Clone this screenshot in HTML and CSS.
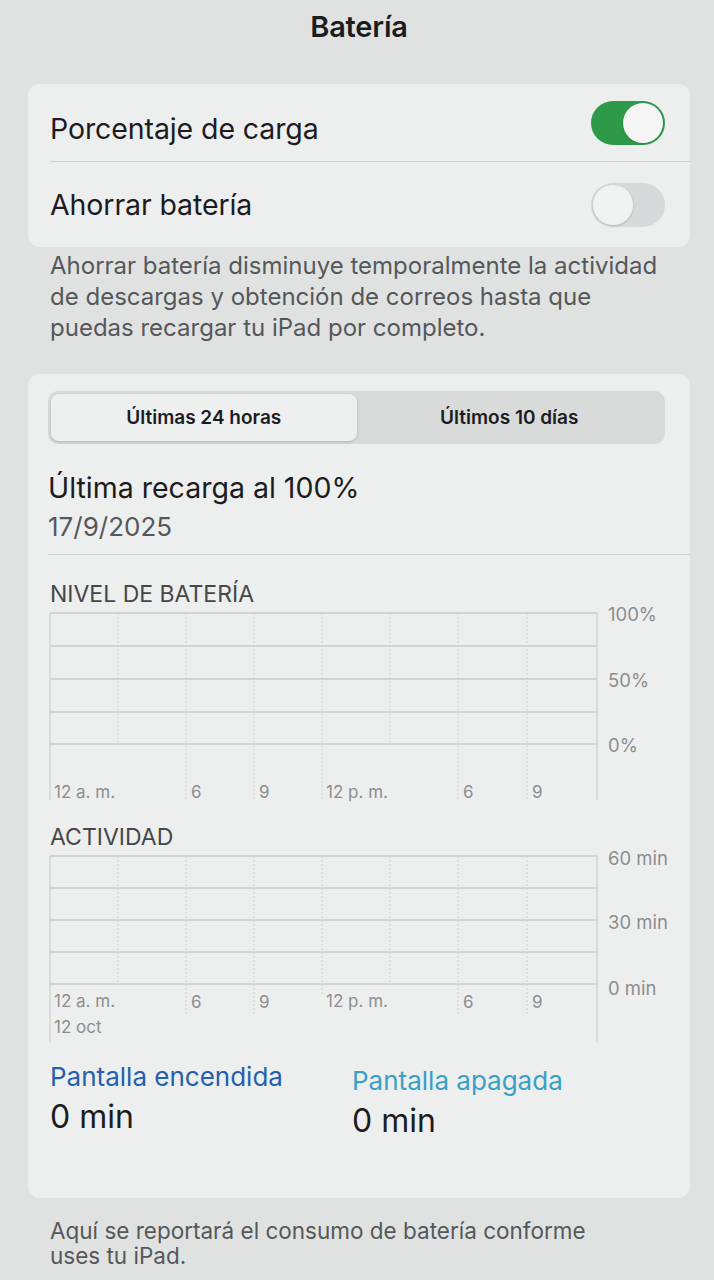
FILE: index.html
```html
<!DOCTYPE html>
<html lang="es">

<head>
    <meta charset="UTF-8">
    <meta name="viewport" content="width=device-width, initial-scale=1.0">
    <title>Batería</title>
    <link rel="stylesheet" href="styles.css">
</head>

<body>
    <div class="page">
        <h1 class="nav-title">Batería</h1>

        <!-- Switches -->
        <div class="card">
            <div class="row row-first">
                <span class="row-label">Porcentaje de carga</span>
                <span class="switch switch-on"><span class="knob"></span></span>
            </div>
            <div class="row row-last">
                <span class="row-label">Ahorrar batería</span>
                <span class="switch"><span class="knob"></span></span>
            </div>
        </div>
        <p class="footnote">Ahorrar batería disminuye temporalmente la actividad<br>de descargas y obtención de correos hasta que<br>puedas recargar tu iPad por completo.</p>

        <!-- Usage -->
        <div class="card usage">
            <div class="segmented">
                <div class="segment selected">Últimas 24 horas</div>
                <div class="segment">Últimos 10 días</div>
            </div>

            <div class="last-charge">Última recarga al 100%</div>
            <div class="last-date">17/9/2025</div>
            <div class="separator"></div>

            <div class="section-label">NIVEL DE BATERÍA</div>
            <svg class="chart" viewBox="0 0 642 200" width="642" height="200">
                <g class="grid-h">
                    <line x1="2" y1="10" x2="549" y2="10" />
                    <line x1="2" y1="43" x2="549" y2="43" />
                    <line x1="2" y1="76" x2="549" y2="76" />
                    <line x1="2" y1="109" x2="549" y2="109" />
                    <line x1="2" y1="141" x2="549" y2="141" />
                </g>
                <g class="grid-v">
                    <line x1="70" y1="10" x2="70" y2="141" />
                    <line x1="342" y1="10" x2="342" y2="141" />
                    <line x1="138" y1="10" x2="138" y2="197" />
                    <line x1="206" y1="10" x2="206" y2="197" />
                    <line x1="274" y1="10" x2="274" y2="197" />
                    <line x1="410" y1="10" x2="410" y2="197" />
                    <line x1="479" y1="10" x2="479" y2="197" />
                </g>
                <g class="grid-edge">
                    <line x1="2" y1="10" x2="2" y2="197" />
                    <line x1="549" y1="10" x2="549" y2="197" />
                </g>
                <g class="axis-y">
                    <text x="560" y="11">100%</text>
                    <text x="560" y="77">50%</text>
                    <text x="560" y="142">0%</text>
                </g>
                <g class="axis-x">
                    <text x="6" y="189">12 a. m.</text>
                    <text x="143" y="189">6</text>
                    <text x="211" y="189">9</text>
                    <text x="278" y="189">12 p. m.</text>
                    <text x="415" y="189">6</text>
                    <text x="484" y="189">9</text>
                </g>
            </svg>

            <div class="section-label section-activity">ACTIVIDAD</div>
            <svg class="chart" viewBox="0 0 642 200" width="642" height="200">
                <g class="grid-h">
                    <line x1="2" y1="10" x2="549" y2="10" />
                    <line x1="2" y1="42" x2="549" y2="42" />
                    <line x1="2" y1="74" x2="549" y2="74" />
                    <line x1="2" y1="106" x2="549" y2="106" />
                    <line x1="2" y1="138" x2="549" y2="138" />
                </g>
                <g class="grid-v">
                    <line x1="70" y1="10" x2="70" y2="138" />
                    <line x1="342" y1="10" x2="342" y2="138" />
                    <line x1="138" y1="10" x2="138" y2="168" />
                    <line x1="206" y1="10" x2="206" y2="168" />
                    <line x1="274" y1="10" x2="274" y2="150" />
                    <line x1="410" y1="10" x2="410" y2="168" />
                    <line x1="479" y1="10" x2="479" y2="168" />
                </g>
                <g class="grid-edge">
                    <line x1="2" y1="10" x2="2" y2="197" />
                    <line x1="549" y1="10" x2="549" y2="197" />
                </g>
                <g class="axis-y">
                    <text x="560" y="12">60 min</text>
                    <text x="560" y="76">30 min</text>
                    <text x="560" y="142">0 min</text>
                </g>
                <g class="axis-x">
                    <text x="6" y="155">12 a. m.</text>
                    <text x="143" y="156">6</text>
                    <text x="211" y="156">9</text>
                    <text x="278" y="155">12 p. m.</text>
                    <text x="415" y="156">6</text>
                    <text x="484" y="156">9</text>
                    <text x="6" y="181">12 oct</text>
                </g>
            </svg>

            <div class="stats">
                <div class="stat">
                    <div class="stat-label on">Pantalla encendida</div>
                    <div class="stat-value">0 min</div>
                </div>
                <div class="stat stat-off">
                    <div class="stat-label off">Pantalla apagada</div>
                    <div class="stat-value">0 min</div>
                </div>
            </div>
        </div>
        <p class="footnote footnote-bottom">Aquí se reportará el consumo de batería conforme<br>uses tu iPad.</p>
    </div>
</body>

</html>
```

FILE: styles.css
```css
body {
    margin: 0;
    background-color: #e0e2e2;
    font-family: 'Inter', 'Roboto', sans-serif;
    color: #1c1c1e;
}

.page {
    padding: 11px 24px 0 28px;
}

.nav-title {
    margin: 0;
    text-align: center;
    font-size: 29px;
    line-height: 32px;
    font-weight: 600;
    letter-spacing: -0.2px;
}

.card {
    margin-top: 41px;
    background-color: #edeeee;
    border-radius: 12px;
}

/* toggle rows */
.row {
    display: flex;
    align-items: center;
    justify-content: space-between;
    padding: 0 25px 0 22px;
}

.row-first {
    height: 78px;
    position: relative;
}

.row-first .row-label {
    padding-top: 10px;
}

.row-first::after {
    content: "";
    position: absolute;
    left: 22px;
    right: 0;
    bottom: 0;
    border-bottom: 1px solid #cfd1d1;
}

.row-last {
    height: 85px;
}

.row-label {
    font-size: 28.5px;
    letter-spacing: -0.1px;
}

.switch {
    display: flex;
    align-items: center;
    width: 74px;
    height: 44px;
    padding: 2px;
    box-sizing: border-box;
    border-radius: 22px;
    background-color: #d8d9da;
}

.switch .knob {
    width: 40px;
    height: 40px;
    border-radius: 50%;
    background-color: #f1f2f2;
    box-shadow: 0 1px 3px rgba(0, 0, 0, 0.15);
}

.switch-on {
    background-color: #2e9a49;
    justify-content: flex-end;
}

.switch-on .knob {
    background-color: #f4f5f4;
}

.footnote {
    margin: 3px 0 0;
    padding-left: 22px;
    font-size: 24px;
    line-height: 31px;
    color: #55585a;
}

/* usage card */
.usage {
    margin-top: 31px;
    padding: 17px 0 60px 20px;
}

.segmented {
    display: flex;
    width: 617px;
    height: 53px;
    padding: 3px;
    box-sizing: border-box;
    border-radius: 10px;
    background-color: #d9dbdb;
}

.segment {
    flex: 1;
    display: flex;
    align-items: center;
    justify-content: center;
    font-size: 19px;
    font-weight: 600;
}

.segment.selected {
    background-color: #eeefef;
    border-radius: 8px;
    box-shadow: 0 1px 3px rgba(0, 0, 0, 0.18);
}

.last-charge {
    margin-top: 27px;
    font-size: 28.5px;
    line-height: 34px;
}

.last-date {
    margin-top: 7px;
    font-size: 26px;
    line-height: 30px;
    color: #55585a;
}

.separator {
    margin-top: 12px;
    border-bottom: 1px solid #cfd1d1;
}

.section-label {
    margin-top: 27px;
    padding-left: 2px;
    font-size: 23px;
    line-height: 24px;
    color: #45484a;
}

.section-activity {
    margin-top: 22px;
}

.chart {
    display: block;
    margin-top: -3px;
    overflow: visible;
}

.grid-h line {
    stroke: #c8caca;
    stroke-width: 1.3;
}

.grid-v line {
    stroke: #cdcfcf;
    stroke-width: 1;
    stroke-dasharray: 2 2;
}

.grid-edge line {
    stroke: #cdcfcf;
    stroke-width: 1.2;
}

.chart text {
    font-family: 'Inter', 'Roboto', sans-serif;
    dominant-baseline: central;
    fill: #8b8e8f;
}

.axis-y text {
    font-size: 18.5px;
}

.axis-x text {
    font-size: 17px;
}

.stats {
    display: grid;
    grid-template-columns: 302px auto;
    margin-top: 17px;
    padding-left: 2px;
}

.stat-off {
    margin-top: 4px;
}

.stat-label {
    font-size: 26px;
    line-height: 28px;
}

.stat-label.on {
    color: #2460ad;
}

.stat-label.off {
    color: #3aa0c6;
}

.stat-value {
    margin-top: 9px;
    font-size: 32px;
    line-height: 34px;
}

.footnote-bottom {
    margin-top: 20px;
    font-size: 22.5px;
    line-height: 25px;
}
```
